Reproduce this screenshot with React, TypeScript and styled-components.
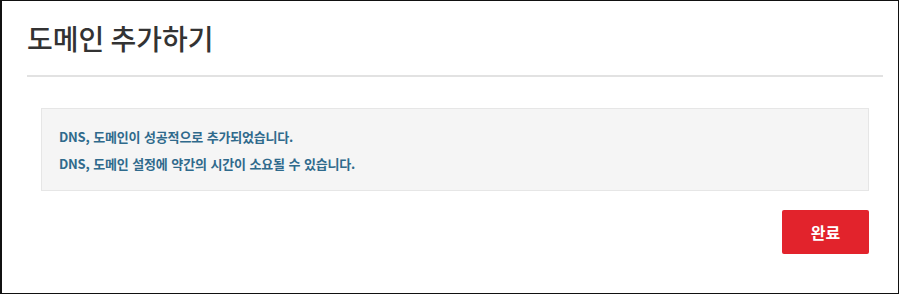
import React from "react";
import styled, { createGlobalStyle } from "styled-components";

const Global = createGlobalStyle`
  html, body { margin: 0; padding: 0; background: #fff; }
  body { font-family: "Noto Sans CJK KR", "Noto Sans", sans-serif; }
`;

const Frame = styled.div`
  box-sizing: border-box;
  width: 899px;
  height: 294px;
  border: 1px solid #111;
  border-left-width: 2px;
  background: #fff;
  padding: 0 15px 0 25px;
  display: flex;
  flex-direction: column;
`;

const Title = styled.h1`
  margin: 0;
  padding-top: 18px;
  height: 76px;
  box-sizing: border-box;
  font-size: 28px;
  line-height: 38px;
  font-weight: 500;
  color: #333;
  letter-spacing: 0;
  border-bottom: 2px solid #e2e2e2;
`;

const Body = styled.div`
  padding: 31px 14px 0 14px;
  display: flex;
  flex-direction: column;
`;

const Notice = styled.div`
  box-sizing: border-box;
  height: 83px;
  background: #f5f5f5;
  border: 1px solid #e6e6e6;
  padding: 17px 17px 0;
  display: flex;
  flex-direction: column;
  gap: 6px;
`;

const NoticeLine = styled.p`
  margin: 0;
  font-size: 13px;
  line-height: 21px;
  font-weight: 700;
  color: #2f6a8c;
  letter-spacing: -0.2px;
  word-spacing: 1px;
`;

const Actions = styled.div`
  display: flex;
  justify-content: flex-end;
  padding-top: 19px;
`;

const Button = styled.button`
  width: 87px;
  height: 44px;
  border: none;
  border-radius: 2px;
  background: #e2232c;
  color: #fff;
  font-family: "Noto Sans CJK KR", "Noto Sans", sans-serif;
  font-size: 16px;
  font-weight: 700;
  cursor: pointer;
`;

export default function App() {
  return (
    <>
      <Global />
      <Frame>
        <Title>도메인 추가하기</Title>
        <Body>
          <Notice>
            <NoticeLine>DNS, 도메인이 성공적으로 추가되었습니다.</NoticeLine>
            <NoticeLine>DNS, 도메인 설정에 약간의 시간이 소요될 수 있습니다.</NoticeLine>
          </Notice>
          <Actions>
            <Button>완료</Button>
          </Actions>
        </Body>
      </Frame>
    </>
  );
}
